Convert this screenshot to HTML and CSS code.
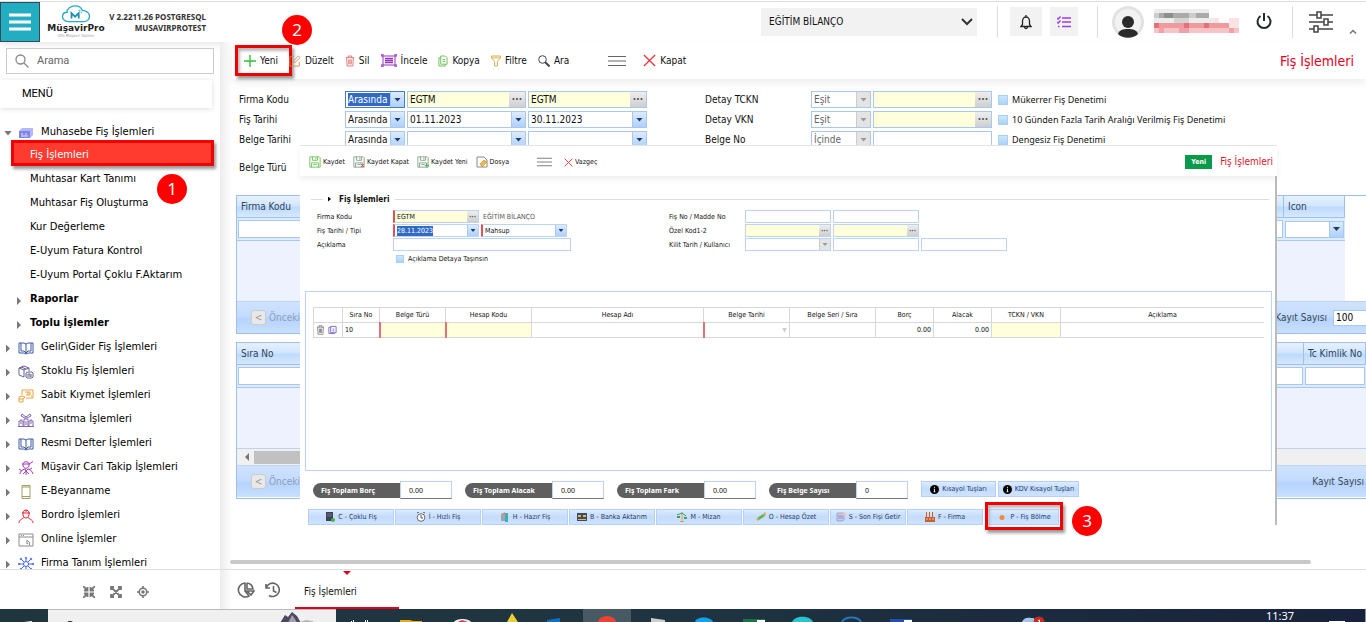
FILE: index.html
```
<!DOCTYPE html>
<html lang="tr">
<head>
<meta charset="utf-8">
<title>MüşavirPro - Fiş İşlemleri</title>
<link rel="stylesheet" href="styles.css">
</head>
<body>
<svg class="sprite" aria-hidden="true">
  <symbol id="i-book" viewBox="0 0 16 14"><path d="M1 2h5l2 1 2-1h5v10h-5l-2 1-2-1H1zM8 3v10M3 2v8h3l2 2 2-2h3V2"/></symbol>
  <symbol id="i-trash" viewBox="0 0 12 14"><path d="M1 3h10M4 3V1h4v2M2 3l.6 10h6.800L10 3M4.500 5v6M6 5v6M7.500 5v6"/></symbol>
  <symbol id="i-x" viewBox="0 0 14 14"><path d="M1 1l12 12M13 1L1 13" stroke="#e8323c" stroke-width="1.400"/></symbol>
  <symbol id="i-save" viewBox="0 0 14 14"><path d="M1 1h11l1 1v11H1zM4 1v4h6V1M8 2v2M3 13V8h8v5M5 10h4"/></symbol>
  <symbol id="i-bars" viewBox="0 0 18 12"><path d="M0 1.500h18M0 6h18M0 10.500h18"/></symbol>
  <symbol id="i-info" viewBox="0 0 10 10"><circle cx="5" cy="5" r="5" fill="#000"/><path d="M5 2v1.200M4.200 4.500H5v3M4 7.500h2" stroke="#fff"/></symbol>
</svg>
<div class="app">
  <header class="top">
    <button class="burger" aria-label="Menü"><svg viewBox="0 0 22 18" width="22" height="18"><path d="M0 2h22M0 9h22M0 16h22" stroke="#fff" stroke-width="3"/></svg></button>
    <div class="logo">
      <svg viewBox="0 0 32 20" width="32" height="18"><path d="M8 18.500C4 18.500 1 16 1 13s2-5 5-5c0-4 4-7 9-7 4 0 7 2 8 5 5 0 8 3 8 6.500s-3 6-6 6H8z" fill="none" stroke="#2aa9c4" stroke-width="1.500"/><path d="M11 15V9l4 4 4-4v6" fill="none" stroke="#1d8fb0" stroke-width="2"/><path d="M19 6h2M21 8h2" stroke="#2aa9c4"/></svg>
      <b>MüşavirPro</b><small>Ofis Müşavir Yazılımı</small>
    </div>
    <p class="version">V 2.2211.26 POSTGRESQL<br>MUSAVIRPROTEST</p>
    <div class="company"><select aria-label="Firma"><option>EĞİTİM BİLANÇO</option></select><svg viewBox="0 0 12 8" width="12" height="8"><path d="M1 1l5 5 5-5" fill="none" stroke="#333" stroke-width="2"/></svg></div>
    <i class="vline"></i>
    <button class="tile" aria-label="Bildirimler"><svg viewBox="0 0 12 16" width="12" height="16" fill="none" stroke="#222"><path d="M1 12.500l1.500-2V7a3.500 4 0 0 1 7 0v3.500l1.500 2zM4.500 13a1.500 1.500 0 0 0 3 0M6 3V1" stroke-width="1.300"/></svg></button>
    <button class="tile tile-list" aria-label="Görevler"><svg viewBox="0 0 14 12" width="14" height="12" fill="none" stroke="#9a3fe8" stroke-width="1.400"><path d="M5 2h9M5 6h9M5 10.500h9M0 2l1.200 1L3.500.500M0 6l1.200 1 2.300-2.500M1 10.500h1.500"/></svg></button>
    <i class="vline"></i>
    <svg class="avatar" viewBox="0 0 32 32" width="32" height="32"><circle cx="16" cy="16" r="16" fill="#e2e2e2"/><circle cx="16" cy="16" r="13" fill="#f2f2f2"/><circle cx="16" cy="16" r="6" fill="#2b2b2b"/><path d="M6 28c1-4 5-5 10-5s9 1 10 5c-5 5-15 5-20 0z" fill="#2b2b2b"/></svg>
    <svg class="masked" viewBox="0 0 85 26" width="85" height="26"><path d="M0 4h55v5H0z" fill="#aaa"/><path d="M0 4h5v5H0zM35 4h7v5h-7z" fill="#ccc"/><path d="M10 4h9v5h-9z" fill="#8d8d8d"/><path d="M0 0h55v4H0z" fill="#ececec"/><path d="M0 9h65v5H0z" fill="#ececec"/><path d="M20 9h15v5H20z" fill="#d4d4d4"/><path d="M0 14h75v5H0z" fill="#ef9a9f"/><path d="M0 14h5v5H0zM30 14h5v5h-5zM50 14h5v5h-5z" fill="#e5707a"/><path d="M0 19h85v5H0z" fill="#f6c3c6"/><path d="M5 19h5v5H5zM25 19h10v5H25zM75 19h5v5h-5z" fill="#eda2a8"/><path d="M60 9h5v5h-5zM75 9h10v10H75z" fill="#fbe3e4"/></svg>
    <button class="plain power" aria-label="Çıkış"><svg viewBox="0 0 16 17" width="16" height="17" fill="none" stroke="#222b30" stroke-width="2"><path d="M4.500 3A6.500 6.500 0 1 0 11.500 3M8 0v8"/></svg></button>
    <i class="vline"></i>
    <button class="plain sliders" aria-label="Ayarlar"><svg viewBox="0 0 24 22" width="24" height="22" fill="#fff" stroke="#444" stroke-width="1.500"><path d="M0 4h24M0 11h24M0 18h24"/><path d="M8 1h4v6H8zM15 8h4v6h-4zM5 15h4v6H5z"/></svg></button>
    <svg class="up" viewBox="0 0 8 5" width="8" height="5"><path d="M1 4.500L4 1.500l3 3" fill="none" stroke="#777" stroke-width="1.500"/></svg>
  </header>

  <div class="main">
    <aside class="side">
      <label class="search"><svg viewBox="0 0 14 14" width="14" height="14" fill="none" stroke="#888" stroke-width="1.300"><circle cx="5.500" cy="5.500" r="4.500"/><path d="M9 9l4.500 4.500"/></svg><input placeholder="Arama" aria-label="Arama"></label>
      <h2 class="menu-title">MENÜ</h2>
      <nav class="tree">
        <a href="#" class="n0 open"><i class="tri down"></i><svg class="ic" viewBox="0 0 16 14"><path d="M1 5l3-3h11v7l-3 3H1z" fill="#b5b8f5"/><path d="M1 5h11v7H1z" fill="#7f86ea"/><path d="M3 8h2M7 8h2M3 10h7" stroke="#e4e6ff"/></svg>Muhasebe Fiş İşlemleri</a>
        <a href="#" class="n1 sel">Fiş İşlemleri</a>
        <a href="#" class="n1">Muhtasar Kart Tanımı</a>
        <a href="#" class="n1">Muhtasar Fiş Oluşturma</a>
        <a href="#" class="n1">Kur Değerleme</a>
        <a href="#" class="n1">E-Uyum Fatura Kontrol</a>
        <a href="#" class="n1">E-Uyum Portal Çoklu F.Aktarım</a>
        <a href="#" class="n1 grp"><i class="tri"></i>Raporlar</a>
        <a href="#" class="n1 grp"><i class="tri"></i>Toplu İşlemler</a>
        <a href="#" class="n0"><i class="tri"></i><svg class="ic c-blue"><use href="#i-book"/></svg>Gelir\Gider Fiş İşlemleri</a>
        <a href="#" class="n0"><i class="tri"></i><svg class="ic c-slate" viewBox="0 0 16 14"><path d="M1 3l5-2 5 2v3M1 3v7l5 2V5L1 3M6 5l5-2M3 2l5 2M8 8l2-1h4l1 1v4l-1 1H9l-1-1zM10 12v-3h2v3M13 9v3"/></svg>Stoklu Fiş İşlemleri</a>
        <a href="#" class="n0"><i class="tri"></i><svg class="ic c-orange" viewBox="0 0 16 14"><path d="M4 6V1h11v8H8M7 3h5v3H8M10 3v3M1 13V8l3-1 3 1-2 2v3zM1 10h4M13 7h1"/></svg>Sabit Kıymet İşlemleri</a>
        <a href="#" class="n0"><i class="tri"></i><svg class="ic c-violet" viewBox="0 0 16 14"><path d="M1 13V8h4v5M6 13V6h4v7M11 13V8h4v5M0 13.500h16M8 6V3M8 4L4 1 3 3l4 2M8 4l4-3 1 2-4 2M3 8V6M13 8V6M7 9h2M7 11h2M2 10h2M12 10h2"/></svg>Yansıtma İşlemleri</a>
        <a href="#" class="n0"><i class="tri"></i><svg class="ic c-blue"><use href="#i-book"/></svg>Resmi Defter İşlemleri</a>
        <a href="#" class="n0"><i class="tri"></i><svg class="ic c-purple" viewBox="0 0 16 14"><path d="M5 3c0-3 6-3 6 0L15 .500M4 3h8M5 3v2c1 3 5 3 6 0V3M2 13c0-3 2-4 5-5l1 2 2-2c2 0 4 2 5 5M5 13l3-3 3 3M8 10v4M1 8l3 2M14 7l-3 2"/></svg>Müşavir Cari Takip İşlemleri</a>
        <a href="#" class="n0"><i class="tri"></i><svg class="ic c-olive" viewBox="0 0 16 14"><path d="M4 .500h8v13H4zM4 2h8M4 11.500h8"/></svg>E-Beyanname</a>
        <a href="#" class="n0"><i class="tri"></i><svg class="ic c-red" viewBox="0 0 16 14"><path d="M5 4c0-4 6-4 6 0v2c-1 4-5 4-6 0zM4 4h8M6 8c0 2-5 2-5 6M10 8c0 2 5 2 5 6M8 1v2"/></svg>Bordro İşlemleri</a>
        <a href="#" class="n0"><i class="tri"></i><svg class="ic c-gray" viewBox="0 0 16 14"><path d="M1 1h14v12H1zM1 4h14M3 2.500h1M5 2.500h1M9 7l3 3-1 .500 1 2M9 7v4l1-.5"/></svg>Online İşlemler</a>
        <a href="#" class="n0"><i class="tri"></i><svg class="ic c-royal" viewBox="0 0 16 14"><circle cx="8" cy="7" r="2.500"/><path d="M8 4.500V2M8 9.500V12M5.500 7H1M10.500 7H15M6 5L3 2M10 5l3-3M6 9l-3 3M10 9l3 3"/><circle cx="8" cy="1" r=".8"/><circle cx="3" cy="2" r=".8"/><circle cx="13" cy="2" r=".8"/><circle cx="1" cy="7" r=".8"/><circle cx="15" cy="7" r=".8"/><circle cx="3" cy="12" r=".8"/><circle cx="13" cy="12" r=".8"/></svg>Firma Tanım İşlemleri</a>
      </nav>
      <div class="side-foot">
        <button class="plain" aria-label="Daralt"><svg viewBox="0 0 12 12" width="12" height="12" fill="none" stroke="#777" stroke-width="1.800"><path d="M0 0l4 4M12 0L8 4M0 12l4-4M12 12L8 8M1 4.500h3.500V1M11 4.500H7.500V1M1 7.500h3.500V11M11 7.500H7.500V11"/></svg></button>
        <button class="plain" aria-label="Genişlet"><svg viewBox="0 0 12 12" width="12" height="12" fill="none" stroke="#777" stroke-width="1.800"><path d="M1 1l10 10M11 1L1 11M1 4V1h3M8 1h3v3M1 8v3h3M8 11h3V8"/></svg></button>
        <button class="plain" aria-label="Odakla"><svg viewBox="0 0 12 12" width="12" height="12" fill="none" stroke="#777" stroke-width="1.600"><circle cx="6" cy="6" r="3.800"/><path d="M6 0v2M6 10v2M0 6h2M10 6h2"/><circle cx="6" cy="6" r="1" fill="#777"/></svg></button>
      </div>
    </aside>

    <section class="content">
      <div class="bar">
        <button class="tool mark"><svg class="t-green" viewBox="0 0 14 14" width="12" height="12"><path d="M7 0v14M0 7h14" stroke-width="1.600"/></svg>Yeni</button>
        <button class="tool"><svg class="t-tan" viewBox="0 0 14 14" width="12" height="12"><path d="M6 2H1v11h11V8M5 9l1-3 5-5 2 2-5 5z"/></svg>Düzelt</button>
        <button class="tool"><svg class="t-pink" width="10" height="12"><use href="#i-trash"/></svg>Sil</button>
        <button class="tool"><svg class="t-purple" viewBox="0 0 16 13" width="16" height="13"><path d="M2 2h12v9H2zM0 1h3M13 1h3M0 12h3M13 12h3M1 0v3M15 0v3M1 10v3M15 10v3"/><path d="M4 4.500h8M4 6.500h8M4 8.500h8" stroke-width="1.400"/></svg>İncele</button>
        <button class="tool"><svg class="t-lime" viewBox="0 0 11 13" width="10" height="12"><path d="M3 1h5l2 2v7H3zM3 3H1v9h7v-2M5 5h3M5 7h3"/></svg>Kopya</button>
        <button class="tool"><svg class="t-gold" viewBox="0 0 11 13" width="10" height="12"><path d="M.5 1h10v2L7 7v5H4V7L.5 3zM1 3h9"/></svg>Filtre</button>
        <button class="tool"><svg class="t-dark" viewBox="0 0 12 12" width="12" height="12"><circle cx="4.500" cy="4.500" r="3.800"/><path d="M7 7l4.500 4.500" stroke-width="2"/></svg>Ara</button>
        <button class="tool gap" aria-label="Menü"><svg class="t-gray" width="18" height="12"><use href="#i-bars"/></svg></button>
        <button class="tool gap2"><svg width="13" height="13"><use href="#i-x"/></svg>Kapat</button>
        <h1>Fiş İşlemleri</h1>
      </div>

      <form class="filters">
        <label for="f1">Firma Kodu</label>
        <span class="box focus"><select id="f1" class="hl"><option>Arasında</option></select><i class="dd"></i></span>
        <span class="box y"><input value="EGTM" aria-label="Firma Kodu başlangıç"><button type="button" class="dots">···</button></span>
        <span class="box y"><input value="EGTM" aria-label="Firma Kodu bitiş"><button type="button" class="dots">···</button></span>
        <label for="f4" class="c6">Detay TCKN</label>
        <span class="box off"><select id="f4"><option>Eşit</option></select><i class="dd"></i></span>
        <span class="box y"><input aria-label="Detay TCKN"><button type="button" class="dots">···</button></span>
        <label class="ck"><input type="checkbox">Mükerrer Fiş Denetimi</label>

        <label for="f2">Fiş Tarihi</label>
        <span class="box"><select id="f2"><option>Arasında</option></select><i class="dd"></i></span>
        <span class="box"><input value="01.11.2023" aria-label="Fiş Tarihi başlangıç"><i class="dd"></i></span>
        <span class="box"><input value="30.11.2023" aria-label="Fiş Tarihi bitiş"><i class="dd"></i></span>
        <label for="f5" class="c6">Detay VKN</label>
        <span class="box off"><select id="f5"><option>Eşit</option></select><i class="dd"></i></span>
        <span class="box y"><input aria-label="Detay VKN"><button type="button" class="dots">···</button></span>
        <label class="ck"><input type="checkbox">10 Günden Fazla Tarih Aralığı Verilmiş Fiş Denetimi</label>

        <label for="f3">Belge Tarihi</label>
        <span class="box"><select id="f3"><option>Arasında</option></select><i class="dd"></i></span>
        <span class="box"><input aria-label="Belge Tarihi başlangıç"><i class="dd"></i></span>
        <span class="box"><input aria-label="Belge Tarihi bitiş"><i class="dd"></i></span>
        <label for="f6" class="c6">Belge No</label>
        <span class="box off"><select id="f6"><option>İçinde</option></select><i class="dd"></i></span>
        <span class="box"><input aria-label="Belge No"></span>
        <label class="ck"><input type="checkbox">Dengesiz Fiş Denetimi</label>
        <span class="last">Belge Türü</span>
      </form>

      <section class="grid g1">
        <table>
          <colgroup><col><col class="w-icon"></colgroup>
          <thead><tr><th>Firma Kodu</th><th>Icon</th></tr></thead>
          <tbody>
            <tr class="flt"><td><input aria-label="Firma Kodu süz"></td><td><span class="box"><input aria-label="Icon süz"><i class="dd"></i></span></td></tr>
            <tr class="body"><td colspan="2"></td></tr>
          </tbody>
        </table>
        <div class="pager"><button class="prev"><i>&lt;</i>Önceki</button><label>Kayıt Sayısı <input value="100"></label></div>
      </section>

      <section class="grid g2">
        <table>
          <colgroup><col><col class="w-tc"></colgroup>
          <thead><tr><th>Sıra No</th><th>Tc Kimlik No</th></tr></thead>
          <tbody>
            <tr class="flt"><td><input aria-label="Sıra No süz"></td><td><input aria-label="Tc Kimlik No süz"></td></tr>
            <tr class="body"><td colspan="2"></td></tr>
          </tbody>
        </table>
        <div class="scroll"><i class="tri left"></i><i class="thumb"></i></div>
        <div class="pager"><button class="prev"><i>&lt;</i>Önceki</button><span class="count">Kayıt Sayısı</span></div>
      </section>

      <div class="hscroll"></div>
      <footer class="tabs">
        <button class="plain" aria-label="Grafik"><svg viewBox="0 0 18 16" width="18" height="16" fill="none" stroke="#666" stroke-width="1.600"><path d="M8 1a7 7 0 1 0 4 13L8 9zM10 1v6h6a7 7 0 0 0-6-6M10 9h7l-3 4z"/></svg></button>
        <button class="plain" aria-label="Geçmiş"><svg viewBox="0 0 16 16" width="16" height="16" fill="none" stroke="#666" stroke-width="1.600"><path d="M1 2v4h4M1.500 5A6.700 6.700 0 1 1 4 13.500M8.500 4v5l3 1.500"/></svg></button>
        <a href="#" class="tab">Fiş İşlemleri</a>
      </footer>

      <section class="dialog" role="dialog" aria-label="Fiş İşlemleri">
        <div class="dbar">
          <button class="tool"><svg class="t-lime" width="12" height="12"><use href="#i-save"/></svg>Kaydet</button>
          <button class="tool"><svg class="t-save" viewBox="0 0 14 14" width="12" height="12"><use href="#i-save"/><path d="M9 9l4 4M13 9l-4 4" stroke="#e33"/></svg>Kaydet Kapat</button>
          <button class="tool"><svg class="t-save" viewBox="0 0 14 14" width="12" height="12"><use href="#i-save"/><path d="M9 11h5M11.500 8.500v5" stroke="#3b4"/></svg>Kaydet Yeni</button>
          <button class="tool"><svg viewBox="0 0 12 12" width="12" height="12"><path d="M1 1h7l3 3v7H1z" fill="#fff" stroke="#888"/><path d="M4 8l4-4 3 2-5 5z" fill="#f0b64c" stroke="#c98a2b" stroke-width=".6"/></svg>Dosya</button>
          <button class="tool gap" aria-label="Menü"><svg class="t-gray" width="15" height="10"><use href="#i-bars"/></svg></button>
          <button class="tool gap2"><svg width="9" height="9"><use href="#i-x"/></svg>Vazgeç</button>
          <span class="badge">Yeni</span><h2>Fiş İşlemleri</h2>
        </div>
        <div class="dmain">
          <h3 class="legend"><i class="tri"></i>Fiş İşlemleri</h3>
          <form class="dform">
            <div class="col">
              <label for="d1">Firma Kodu</label>
              <div class="row"><span class="box y req w86"><input id="d1" value="EGTM"><button type="button" class="dots">···</button></span><span class="ro">EĞİTİM BİLANÇO</span></div>
              <label for="d2">Fiş Tarihi / Tipi</label>
              <div class="row"><span class="box req w86"><input id="d2" class="hl" value="28.11.2023"><i class="dd"></i></span><span class="box req w86"><select aria-label="Tipi"><option>Mahsup</option></select><i class="dd"></i></span></div>
              <label for="d3">Açıklama</label>
              <div class="row"><span class="box w178"><input id="d3"></span></div>
              <label class="ck c2"><input type="checkbox">Açıklama Detaya Taşınsın</label>
            </div>
            <div class="col">
              <label for="d4">Fiş No / Madde No</label>
              <div class="row"><span class="box w86"><input id="d4"></span><span class="box w86"><input aria-label="Madde No"></span></div>
              <label for="d5">Özel Kod1-2</label>
              <div class="row"><span class="box y w86"><input id="d5"><button type="button" class="dots">···</button></span><span class="box y w86"><input aria-label="Özel Kod 2"><button type="button" class="dots">···</button></span></div>
              <label for="d6">Kilit Tarih / Kullanıcı</label>
              <div class="row"><span class="box off w86"><input id="d6"><i class="dd"></i></span><span class="box w86"><input aria-label="Kullanıcı"></span><span class="box w86"><input aria-label="Kullanıcı adı"></span></div>
            </div>
          </form>
          <div class="lines">
            <table>
              <colgroup><col class="k29"><col class="k37"><col class="k66"><col class="k86"><col class="k172"><col class="k86"><col class="k86"><col class="k58"><col class="k58"><col class="k69"><col></colgroup>
              <thead><tr><th></th><th>Sıra No</th><th>Belge Türü</th><th>Hesap Kodu</th><th>Hesap Adı</th><th>Belge Tarihi</th><th>Belge Seri / Sıra</th><th>Borç</th><th>Alacak</th><th>TCKN / VKN</th><th>Açıklama</th></tr></thead>
              <tbody><tr><td class="acts"><svg class="t-gray" width="9" height="10"><use href="#i-trash"/></svg><svg class="t-vio" viewBox="0 0 10 10" width="9" height="10"><path d="M3 1h6v7H3zM3 2H1v7h6V8M5 4h2M5 6h2"/></svg></td><td>10</td><td class="yy rq"></td><td class="yy rq"></td><td></td><td class="rq"><i class="tri down"></i></td><td></td><td class="num">0.00</td><td class="num">0.00</td><td class="yy"></td><td></td></tr></tbody>
            </table>
          </div>
          <div class="totals">
            <label class="tot"><span>Fiş Toplam Borç</span><input value="0.00"></label>
            <label class="tot"><span>Fiş Toplam Alacak</span><input value="0.00"></label>
            <label class="tot"><span>Fiş Toplam Fark</span><input value="0.00"></label>
            <label class="tot"><span>Fiş Belge Sayısı</span><input value="0"></label>
            <div class="keys"><button class="bb"><svg width="9" height="9"><use href="#i-info"/></svg>Kısayol Tuşları</button><button class="bb wide"><svg width="9" height="9"><use href="#i-info"/></svg>KDV Kısayol Tuşları</button></div>
          </div>
          <div class="cmds">
            <button class="bb"><svg viewBox="0 0 10 10" width="10" height="10"><path d="M1 0h7v9H1z" fill="#3a4255"/><path d="M2 2h5M2 4h5" stroke="#778"/><circle cx="8" cy="8" r="2" fill="#4ab04a"/></svg>C - Çoklu Fiş</button>
            <button class="bb"><svg viewBox="0 0 10 10" width="10" height="10"><circle cx="5" cy="5.500" r="3.800" fill="#fff" stroke="#667"/><path d="M5 3v3h2M1 1l2-1M9 1L7 0" fill="none" stroke="#556"/></svg>İ - Hızlı Fiş</button>
            <button class="bb"><svg viewBox="0 0 10 10" width="10" height="10"><path d="M1 2l4-2v9H1z" fill="#9aa6b8"/><path d="M5 1h3v9H5z" fill="#38b0b8"/><circle cx="4" cy="3" r="1.500" fill="#e58a80"/></svg>H - Hazır Fiş</button>
            <button class="bb"><svg viewBox="0 0 10 10" width="10" height="10"><path d="M0 1h10v8H0z" fill="#394b70"/><path d="M1 3h3v2H1zM6 3h3v2H6zM1 7h8v1H1z" fill="#f0b840"/></svg>B - Banka Aktarım</button>
            <button class="bb"><svg viewBox="0 0 10 10" width="10" height="10"><path d="M5 0v10M3 9.500h4" stroke="#e0a040"/><path d="M0 3l5-2 4 3" fill="none" stroke="#3a9a58"/><path d="M0 4h3v2H0zM7 5h3v2H7z" fill="#35a080"/></svg>M - Mizan</button>
            <button class="bb"><svg viewBox="0 0 10 10" width="10" height="10"><path d="M1 6l6-4 2 2-6 4z" fill="#5cb85c"/><path d="M7 2l2-2 1 2-1 2zM0 7l2 2 1-1-1-2z" fill="#e8a33a"/></svg>O - Hesap Özet</button>
            <button class="bb short"><svg viewBox="0 0 10 10" width="10" height="10"><path d="M1 1h7v7l-2 1H1z" fill="#c9cce8" stroke="#8a8fc0" stroke-width=".7"/><path d="M2 4h5M2 6h5" stroke="#8a8fc0"/><circle cx="8" cy="2" r="1.800" fill="#f6c0b0"/></svg>S - Son Fişi Getir</button>
            <button class="bb short"><svg viewBox="0 0 10 10" width="10" height="10"><path d="M1 0h1v5H1zM4 0h1v5H4zM7 0h1v5H7zM0 5h10v5H0z" fill="#c8602e"/><path d="M1 7h8" stroke="#f0c0a0" stroke-dasharray="2 1"/></svg>F - Firma</button>
            <button class="bb last-cmd mark"><svg viewBox="0 0 10 10" width="10" height="10"><circle cx="5" cy="5.500" r="2.500" fill="#f08a3c"/></svg>P - Fiş Bölme</button>
          </div>
        </div>
      </section>
    </section>
  </div>

  <div class="taskbar">
    <span class="start"><svg viewBox="0 0 48 13" width="48" height="13"><path d="M24 13l8-1v1z" fill="#fff"/></svg></span>
    <span class="find"><svg viewBox="0 0 288 13" width="288" height="13"><path d="M19 13a3 2 0 0 1 6 0" fill="#222"/><path d="M232 13l5-8 3 2 4-5 5 4 4 7z" fill="#4c4862"/><path d="M240 13l4-8 3 4 2 4z" fill="#a59db0"/><path d="M249 13l9-3 6 1 4 2z" fill="#b9b4c0"/></svg></span>
    <svg class="apps" viewBox="0 0 600 13" width="600" height="13"><path d="M15.500 13v-1M17.500 11v2M29.500 11v2M31.500 11v2" stroke="#fff"/><path d="M64 11h10l3 1h9v1H64z" fill="#e8a81e"/><path d="M118 13c2-4 15-4 17 0z" fill="#e9eef2"/><path d="M122 13l4-2 6 2z" fill="#d83a4a"/><path d="M171 13l5-9 6 9z" fill="#e8cf3a"/><path d="M211 11l13-2v4h-13z" fill="#0f6fc8"/><path d="M247 0h48v13h-48z" fill="#475a63"/><path d="M262 13a9 6 0 0 1 18 0z" fill="#ea4335"/><path d="M315 9l14 2v2h-14z" fill="#c9ced2"/><path d="M359 13c1-6 16-6 18 0z" fill="#14a0ea"/><path d="M407 10h22v3h-22z" fill="#1d7245"/><path d="M421 11h8v2h-8z" fill="#fff"/><path d="M456 13c3-7 18-7 21 0z" fill="#2cc4c8"/><path d="M506 13c3-6 16-6 19 0" fill="none" stroke="#2a75b8" stroke-width="2"/><path d="M554 10h22v3h-22z" fill="#2350a8"/><path d="M568 11h8v2h-8z" fill="#fff"/></svg>
    <svg class="cloud" viewBox="0 0 26 13" width="26" height="13"><path d="M0 13c1-4 6-5 9-4 4 0 6 2 6 4z" fill="#a9c4ec"/><circle cx="17" cy="13" r="5.500" fill="#c92a22"/><path d="M16 12l1.500-1v2" stroke="#fff" fill="none"/></svg>
    <time>11:37</time>
    <svg class="note" viewBox="0 0 40 13" width="40" height="13"><path d="M3 12h16v1H3z" fill="#fff"/><path d="M39.500 0v13" stroke="#8a93a5"/></svg>
  </div>

  <span class="pin p1">1</span><span class="pin p2">2</span><span class="pin p3">3</span>
</div>
</body>
</html>
```
FILE: styles.css
```
* { box-sizing: border-box; }
body { margin: 0; background: #fff; color: #111; font: 10px/14px "DejaVu Sans Condensed", "Noto Sans", sans-serif; }
h1, h2, h3, p { margin: 0; font-weight: normal; }
a { color: inherit; text-decoration: none; }
button, input, select { font: inherit; color: inherit; margin: 0; padding: 0; border: 0; background: none; border-radius: 0; min-width: 0; }
select { appearance: none; }
input { outline: 0; }
.sprite { position: absolute; width: 0; height: 0; }
.app { position: relative; display: flex; flex-direction: column; height: 100vh; min-width: 1280px; overflow: hidden; }

/* header */
.top { display: flex; align-items: center; height: 42px; flex: none; border-top: 1px solid #fff; box-shadow: inset 0 1px #ddd, 0 1px 8px #ddd; position: relative; }
.burger { align-self: flex-end; width: 40px; height: 40px; background: #22adc0; border: 1px solid #34495a; display: grid; place-items: center; }
.logo { width: 56px; margin-left: 8px; display: flex; flex-direction: column; align-items: center; color: #222; }
.logo b { font: bold 9px/10px "DejaVu Sans", sans-serif; }
.logo small { font-size: 4px; line-height: 5px; color: #999; }
.version { width: 102px; text-align: right; font: bold 8px/11px "Noto Sans", sans-serif; color: #333; margin-right: auto; }
.company { width: 216px; height: 28px; background: #f2f2f2; display: flex; align-items: center; padding: 0 4px 0 8px; }
.company select { flex: 1; height: 28px; }
.vline { width: 1px; height: 32px; background: #ddd; margin: 0 12px 0 20px; }
.tile { width: 32px; height: 29px; background: #f2f2f2; display: grid; place-items: center; }
.tile-list { width: 28px; margin-left: 8px; }
.tile-list + .vline { margin: 0 14px 0 19px; }
.masked { margin-left: 10px; }
.plain { display: grid; place-items: center; }
.power { margin-left: 17px; }
.power + .vline { margin: 0 16px 0 20px; }
.up { margin: 20px 9px 0 16px; }

.main { display: flex; flex: 1; min-height: 0; }

/* sidebar */
.side { width: 220px; flex: none; display: flex; flex-direction: column; font: 10px/14px "DejaVu Sans", sans-serif; }
.search { display: flex; align-items: center; gap: 8px; height: 26px; margin: 6px 6px 6px; padding-left: 8px; border: 1px solid #ccc; font: 11px/14px Roboto, sans-serif; }
.search input { flex: 1; }
.search input::placeholder { color: #666; opacity: 1; }
.menu-title { margin-right: 8px; height: 28px; padding-left: 22px; font: 11px/28px Roboto, sans-serif; color: #000; box-shadow: 0 1px 5px #ddd; }
.tree { flex: 1; min-height: 0; overflow: hidden; padding-top: 12px; }
.tree a { display: flex; align-items: center; height: 24px; color: #000; }
.tree .n0 { padding-left: 6px; }
.tree .n1 { padding-left: 30px; position: relative; }
.tree .open { height: 23px; }
.tree .sel { margin: 0 6px 0 11px; padding-left: 19px; color: #fff; background: linear-gradient(#ff3b30, #ff3b30) top / 100% 20px no-repeat; }
.tree .sel::after { content: ""; position: absolute; inset: -3px 0 1px 0; border: 3px solid #f00000; box-shadow: 2px 3px 3px #999; }
.grp { font-weight: bold; }
.n1 .tri { position: absolute; left: 17px; top: 10px; }
.n0 .tri { margin-top: 3px; }
.tri { display: block; width: 4px; height: 8px; background: #777; clip-path: polygon(0 0, 100% 50%, 0 100%); flex: none; }
.tri.down { width: 8px; height: 5px; clip-path: polygon(0 0, 100% 0, 50% 100%); margin-left: -2px; }
.tri.left { clip-path: polygon(100% 0, 0 50%, 100% 100%); }
.ic { width: 16px; height: 14px; margin: 2px 7px 0 8px; fill: none; stroke: currentColor; stroke-width: 1; flex: none; }
.open .ic { margin-left: 6px; stroke: none; }
.c-blue { color: #3d5aa8; } .c-slate { color: #64648c; } .c-orange { color: #eea23c; } .c-violet { color: #8266b4; }
.c-purple { color: #a03cb4; } .c-olive { color: #a0a064; } .c-red { color: #e61e28; } .c-gray { color: #8c8c8c; } .c-royal { color: #4664e6; }
.side-foot { display: flex; justify-content: center; align-items: center; gap: 15px; height: 40px; border-top: 1px solid #ddd; padding: 4px 0 0 12px; }

/* content */
.content { position: relative; flex: 1; min-width: 0; display: flex; flex-direction: column; padding-left: 16px; background: linear-gradient(90deg, #ececec, #fff 12px); }
.bar { display: flex; align-items: center; gap: 11px; height: 37px; padding: 0 12px; margin-left: -4px; background: #fff; box-shadow: 0 4px 8px #eee; }
.tool { display: flex; align-items: center; gap: 4px; position: relative; }
.tool svg { fill: none; stroke: currentColor; }
.gap { margin-left: 28px; } .gap2 { margin-left: 6px; }
.bar h1 { margin-left: auto; font-size: 14px; line-height: 20px; color: #e2001a; }
.t-green { color: #32be3c; } .t-tan { color: #d28c46; } .t-pink { color: #dc6464; } .t-purple { color: #9632be; } .t-lime { color: #64be50; }
.t-gold { color: #d2aa3c; } .t-dark { color: #444; } .t-gray { color: #666; } .t-save { color: #7d9b87; } .t-vio { color: #7864c8; }
.mark::after { content: ""; position: absolute; inset: -9px -14px -8px -9px; border: 3px solid #f00000; box-shadow: 2px 3px 3px #999, inset 2px 3px 3px #bbb; }

.filters { display: grid; grid-template-columns: 104px 60px 119px 119px 160px 60px 119px auto; grid-auto-rows: 17px; gap: 3px 2px; align-items: center; padding: 12px 0 0 3px; height: 116px; align-content: start; flex: none; }
.c6 { padding-left: 56px; }
.last { margin-top: 16px; }
.box { display: flex; align-items: stretch; height: 17px; background: #fff; border: 1px solid #a9c8f0; min-width: 0; }
.box input, .box select { flex: 1; width: 0; padding-left: 2px; height: 100%; }
.box.focus { border-color: #4a7ebb; }
.box.y { background: #ffffdc; }
.dots { width: 16px; background: linear-gradient(#eee, #cfcfcf); color: #555; line-height: 10px; font-weight: bold; text-align: center; }
.dd { width: 14px; background: linear-gradient(#dcecff, #aed0fa); border-left: 1px solid #a9c8f0; display: grid; place-items: center; flex: none; }
.dd::after { content: ""; width: 7px; height: 4px; background: #243c64; clip-path: polygon(0 0, 100% 0, 50% 100%); }
.off { color: #666; }
.off .dd { background: #e4e4e4; border-color: #ccc; }
.off .dd::after { background: #999; }
.hl { color: #fff; background: linear-gradient(#316ac5, #316ac5) 2px 50% / 42px 13px no-repeat; }
.ck { display: flex; align-items: center; gap: 4px; }
.filters .ck { padding-left: 4px; font: 9px/14px "Noto Sans", sans-serif; white-space: nowrap; }
.ck input { appearance: none; width: 10px; height: 10px; border: 1px solid #a9d0f0; background: linear-gradient(#cde6fb, #a9d5f8); }

/* background grids */
.grid { flex: none; border: 1px solid #a0c0ec; border-right: 0; color: #2c4260; }
.g1 { height: 139px; }
.g2 { height: 157px; margin-top: 8px; }
.grid table { table-layout: fixed; width: 100%; border-spacing: 0; }
.grid.g1 table { width: calc(100% - 21px); }
.w-icon { width: 61px; } .w-tc { width: 62px; }
.grid th { height: 22px; padding: 0 4px; text-align: left; font-weight: normal; background: linear-gradient(#e6f1ff, #d3e6ff 45%, #bedafc 55%, #d6e9ff); border-right: 1px solid #a0c0ec; border-bottom: 1px solid #a0c0ec; white-space: nowrap; }
.flt td { height: 23px; padding: 1px; background: #dcebff; border-bottom: 1px solid #a9c8f0; }
.flt td > input { display: block; width: 100%; height: 18px; background: #fff; border: 1px solid #a9c8f0; }
.body td { height: 60px; padding: 0; background: #eef2fe; }
.pager { display: flex; align-items: center; justify-content: space-between; height: 32px; padding-left: 14px; background: linear-gradient(#cfe2ff, #c4dcff 45%, #b6d3fe 55%, #c8e0ff); border-top: 1px solid #bcd4f4; color: #3c4654; }
.prev { display: flex; align-items: center; gap: 3px; color: #8e9fb8; }
.prev i { width: 15px; height: 15px; border-radius: 3px; background: #e8e8e8; font-style: normal; line-height: 13px; color: #999; border: 1px solid #ccc; }
.pager label { display: flex; align-items: center; gap: 6px; }
.count { padding-right: 2px; }
.pager input { width: 33px; height: 16px; background: #fff; border: 1px solid #a9c8f0; border-right: 0; padding-left: 2px; color: #000; }
.scroll { display: flex; align-items: center; gap: 5px; height: 17px; padding-left: 8px; background: #f0f0f0; border-top: 1px solid #bcd4f4; }
.thumb { flex: 0 0 60%; height: 13px; background: #c1c1c1; }
.hscroll { flex: none; height: 4px; margin: auto 55px 5px -6px; border-radius: 2px; background: #c8c8c8; }
.tabs { display: flex; align-items: center; gap: 10px; height: 40px; flex: none; border-top: 1px solid #ddd; margin-left: -16px; padding-left: 17px; }
.tab { position: relative; align-self: stretch; width: 104px; margin-left: 4px; padding: 0 9px; line-height: 44px; border-bottom: 2px solid #e2001a; }
.tab::before { content: ""; position: absolute; left: 48px; top: 1px; width: 8px; height: 4px; background: #e2001a; clip-path: polygon(0 0, 100% 0, 50% 100%); }

/* document window over the list */
.dialog { position: absolute; left: 80px; right: 89px; top: 103px; height: 380px; background: #fff; border-top: 1px solid #e2e2e2; font-size: 7px; line-height: 10px; display: flex; flex-direction: column; }
.dbar { display: flex; align-items: center; gap: 8px; height: 30px; padding: 2px 4px 0 9px; box-shadow: 0 3px 6px #eee; }
.dbar .tool { gap: 2px; }
.dbar .gap { margin-left: 20px; } .dbar .gap2 { margin-left: 4px; }
.badge { margin-left: auto; padding: 0 6px; line-height: 14px; background: #0a9a4a; color: #fff; font-weight: bold; }
.dbar h2 { font-size: 10px; line-height: 14px; color: #dc1428; }
.dmain { flex: 1; border-right: 2px solid #bbb; display: flex; flex-direction: column; padding: 17px 0 0 5px; }
.legend { display: flex; align-items: center; gap: 8px; height: 12px; padding: 0 6px; font-weight: bold; }
.legend::before { content: ""; width: 12px; height: 1px; background: #ddd; margin-right: -3px; }
.legend::after { content: ""; flex: 1; height: 1px; background: #ddd; margin-left: -2px; }
.legend .tri { width: 3px; height: 5px; background: #000; }
.dform { display: grid; grid-template-columns: 352px auto; height: 86px; padding: 5px 0 0 12px; justify-content: start; }
.col { display: grid; grid-template-columns: 76px auto; grid-auto-rows: 13px; row-gap: 1px; align-content: start; align-items: center; }
.row { display: flex; gap: 2px; align-items: center; }
.dform .box { height: 13px; border-color: #bcd4f4; }
.w86 { width: 86px; } .w178 { width: 178px; }
.dform .req { border-left: 2px solid #e0505a; }
.dform .dots { width: 11px; line-height: 8px; }
.dform .dd { width: 11px; }
.dform .dd::after { width: 5px; height: 3px; }
.dform .hl { background-size: 36px 10px; }
.ro { color: #555; margin-left: 2px; }
.c2 { grid-column: 2; padding-left: 3px; }
.dform .ck input { width: 8px; height: 8px; }
.lines { height: 180px; margin-right: 3px; padding: 15px 7px 0; border: 1px solid #bcd4f4; }
.lines table { width: 100%; table-layout: fixed; border-collapse: collapse; }
.lines th, .lines td { height: 15px; padding: 0 2px; border: 1px solid #d8d8d8; font-weight: normal; }
.lines th:last-child, .lines td:last-child { border-right: 0; }
.lines td.yy { background: #ffffdc; }
.lines td.rq { border-left: 2px solid #e0707a; }
.lines .num { text-align: right; }
.lines svg { fill: none; stroke: currentColor; margin-right: 3px; vertical-align: middle; }
.lines .tri { width: 5px; margin-left: auto; background: #ccc; }
.k29 { width: 29px; } .k37 { width: 37px; } .k66 { width: 66px; } .k86 { width: 86px; } .k172 { width: 172px; } .k58 { width: 58px; } .k69 { width: 69px; }
.totals { display: flex; gap: 13px; padding: 10px 0 0 8px; }
.tot { display: flex; align-items: center; width: 139px; font: 7px/10px "Noto Sans", sans-serif; }
.tot span { width: 87px; line-height: 15px; padding-left: 8px; font-weight: bold; color: #fff; background: #5f5f5f; border-radius: 8px 0 0 8px; }
.tot input { flex: 1; height: 18px; padding-left: 8px; border: 1px solid #bcd4f4; border-bottom-color: #777; }
.keys { display: flex; gap: 2px; }
.bb { position: relative; display: flex; align-items: center; justify-content: center; gap: 3px; width: 86px; height: 16px; color: #1e3c6e; background: linear-gradient(#dcebff, #c4dcfd 50%, #cfe3ff); border: 1px solid #b4d0f8; white-space: nowrap; }
.keys .bb { width: 75px; } .keys .wide { width: 81px; }
.bb svg { flex: none; }
.cmds { display: flex; gap: 1px; padding: 10px 0 0 3px; }
.cmds .short { width: 76px; }
.cmds .last-cmd { width: 70px; margin-left: 5px; }
.cmds .mark::after { inset: -8px -5px -6px; }

/* numbered callouts */
.pin { position: absolute; width: 30px; height: 30px; border-radius: 50%; background: #f00; color: #fff; font: 17px/30px "Noto Sans", sans-serif; text-align: center; }
.p1 { left: 157px; top: 174px; } .p2 { left: 282px; top: 15px; } .p3 { left: 1072px; top: 506px; }

/* taskbar */
.taskbar { display: flex; height: 13px; flex: none; background: linear-gradient(90deg, #20363e, #1f3440 50%, #18223c); }
.start { width: 48px; }
.find { width: 288px; background: #f0f0f0; border-top: 1px solid #bbb; height: 13px; overflow: hidden; }
.cloud { margin-left: 86px; }
.taskbar time { margin-left: auto; color: #fff; font: 11px/13px "Noto Sans", sans-serif; }
.note { margin-left: 32px; }
```
